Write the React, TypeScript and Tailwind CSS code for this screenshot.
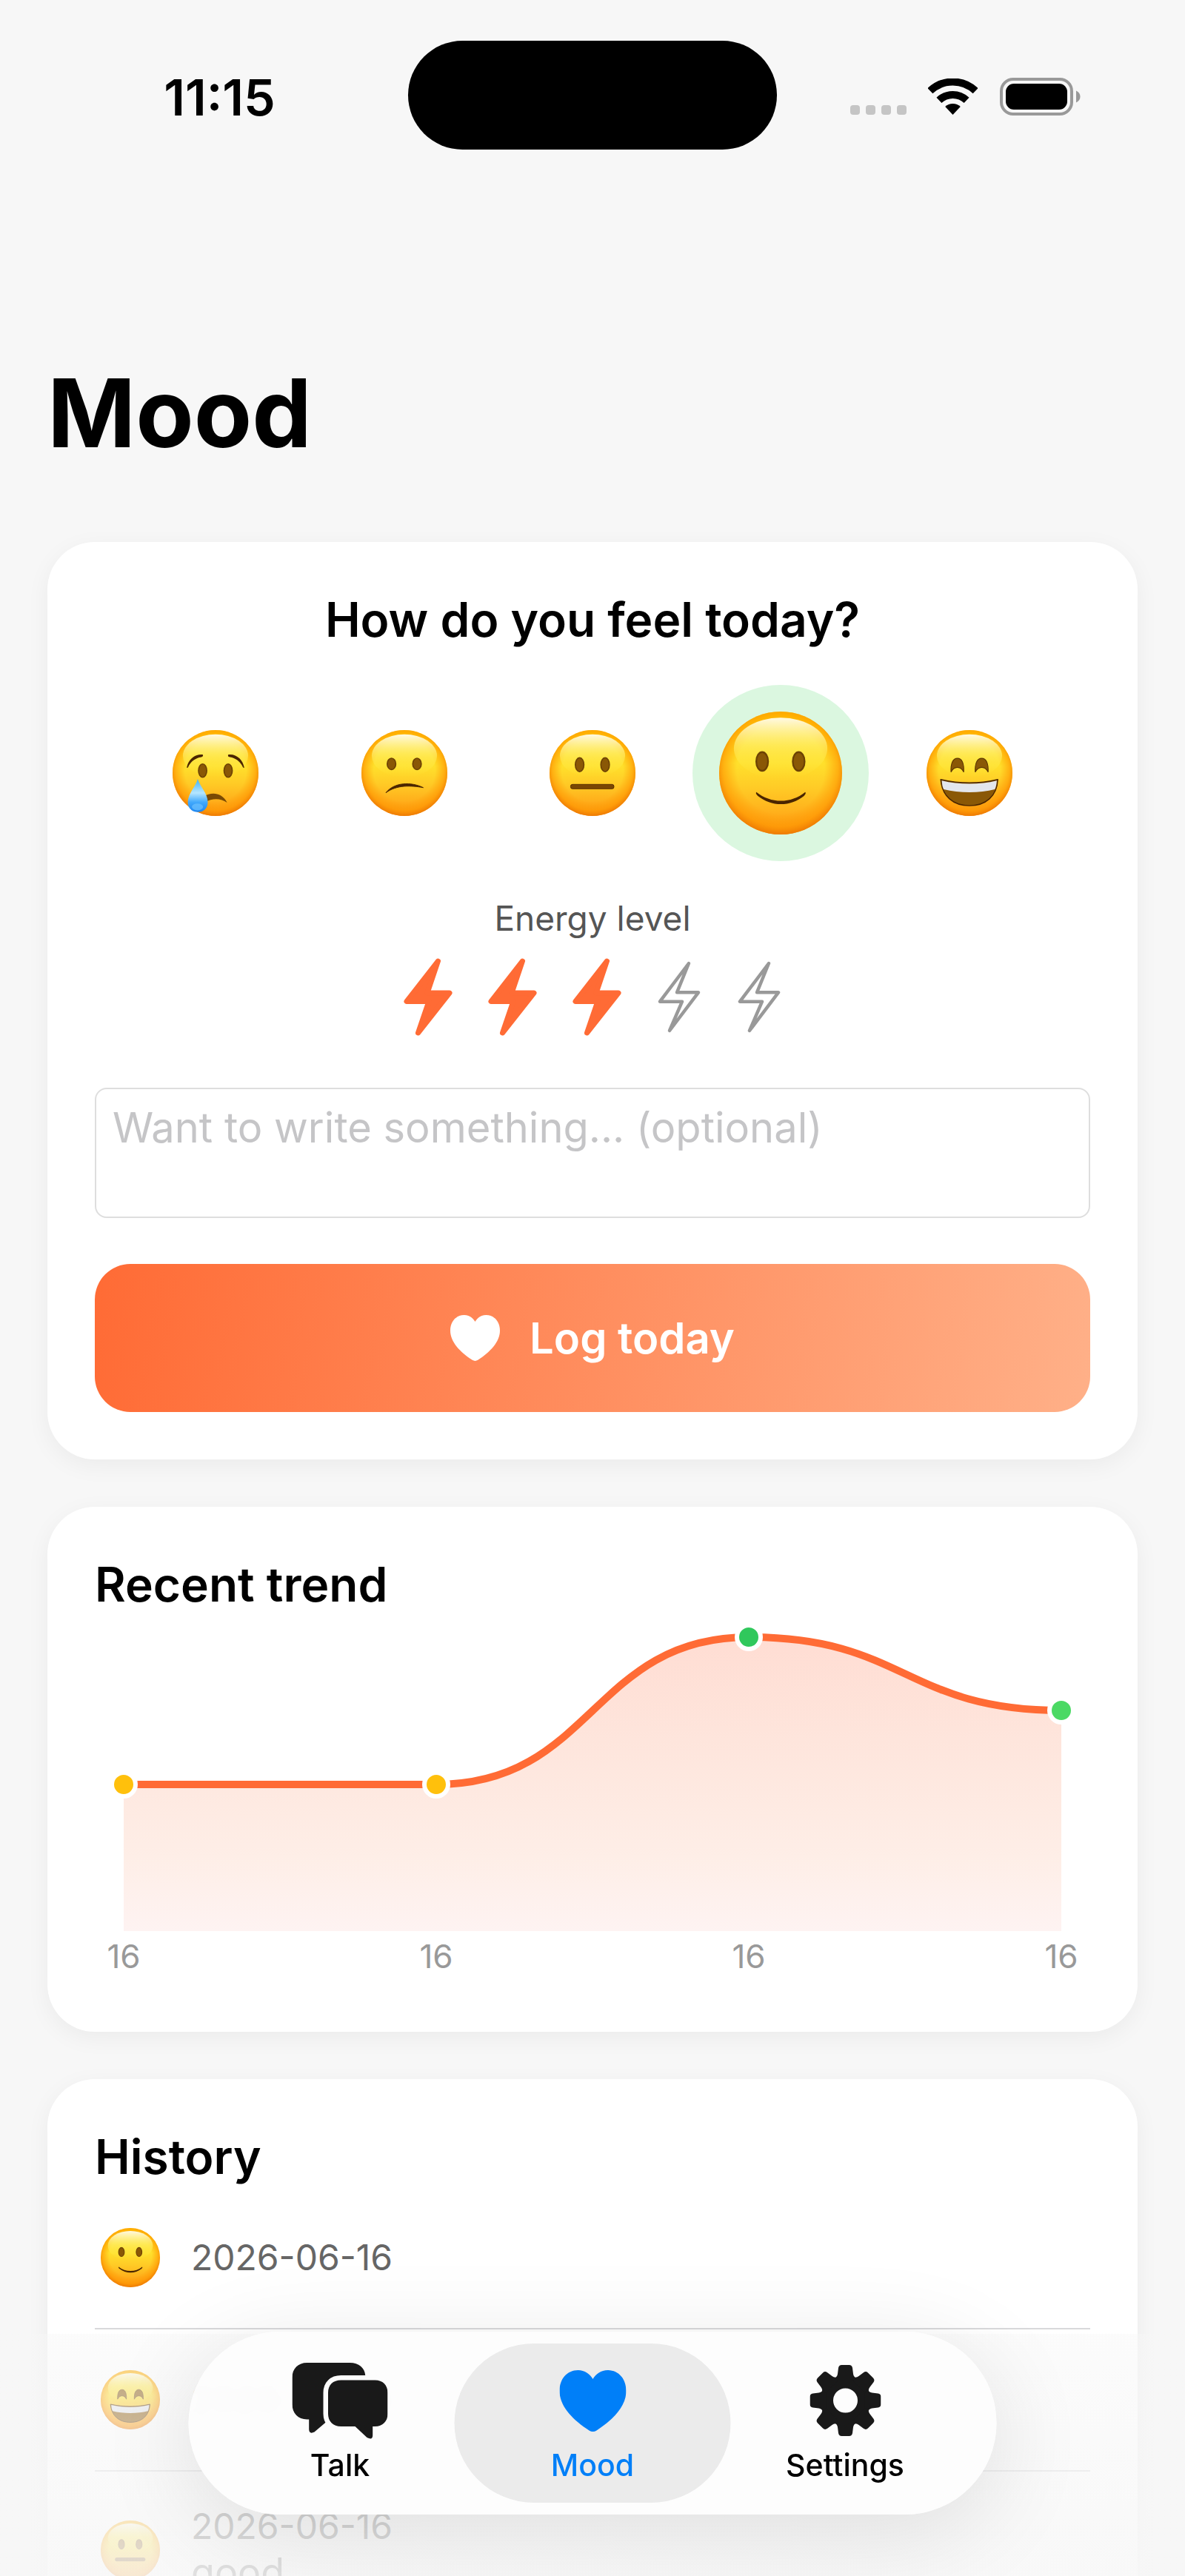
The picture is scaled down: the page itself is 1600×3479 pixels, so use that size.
import { useId, useState } from "react";
import type { ReactNode } from "react";

type Mood = "cry" | "confused" | "neutral" | "smile" | "grin";

const MOODS: { id: Mood; label: string }[] = [
  { id: "cry", label: "Very bad" },
  { id: "confused", label: "Bad" },
  { id: "neutral", label: "Okay" },
  { id: "smile", label: "Good" },
  { id: "grin", label: "Great" },
];

const DARK = "#4a2500";
const BROWN = "#8a5806";

function Eyes({ y, rx, ry }: { y: number; rx: number; ry: number }) {
  return (
    <g fill={BROWN} stroke="#6d4204" strokeWidth="1.4">
      <ellipse cx="35" cy={y} rx={rx - 0.6} ry={ry - 0.6} />
      <ellipse cx="64.7" cy={y} rx={rx - 0.6} ry={ry - 0.6} />
    </g>
  );
}

function Features({ mood, tear }: { mood: Mood; tear: string }) {
  switch (mood) {
    case "cry":
      return (
        <>
          <path d="M16.5 44 C18 35 25 27.5 35 28.5 C36.5 31 34 31.5 31 32 C24.5 34 20.5 38 18 43.5 Z" fill={DARK} />
          <path d="M83.5 44 C82 35 75 27.5 65 28.5 C63.5 31 66 31.5 69 32 C75.5 34 79.5 38 82 43.5 Z" fill={DARK} />
          <Eyes y={47.2} rx={5.4} ry={8.4} />
          <path d="M37 77 C44 72.5 57 71.5 63.5 84.5 C56 79.5 47 79 38 84 Z" fill="#7a4a04" />
          <path d="M29.3 57 C32 66 41 74 41 84 C41 91 36 95.5 29.3 95.5 C22.5 95.5 17.8 91 17.8 84 C17.8 74 27 66 29.3 57 Z" fill={`url(#${tear})`} />
          <ellipse cx="29" cy="89.5" rx="6.5" ry="4" fill="#6cc2ff" opacity="0.7" />
        </>
      );
    case "confused":
      return (
        <>
          <Eyes y={39.4} rx={5.6} ry={7.2} />
          <path d="M28.5 73 C38 60.5 58 60 72 67 C58 64.5 41 63.5 28.5 73 Z" fill={DARK} stroke={DARK} strokeWidth="0.8" strokeLinejoin="round" />
        </>
      );
    case "neutral":
      return (
        <>
          <Eyes y={40.3} rx={5.6} ry={8.7} />
          <rect x="24.5" y="63.2" width="50.5" height="5.2" rx="2.3" fill="#7a4603" stroke={DARK} strokeWidth="0.7" />
        </>
      );
    case "smile":
      return (
        <>
          <Eyes y={40.6} rx={5.4} ry={8.2} />
          <path d="M30.3 65.5 C42 75 58.500 75 70 65.5 C70.8 66.3 70.3 67.3 69 68.6 C58 77.5 42.500 77.5 31.5 68.6 C30 67.3 29.600 66.300 30.3 65.5 Z" fill={DARK} />
        </>
      );
    case "grin":
      return (
        <>
          <g fill={BROWN} stroke="#5f3903" strokeWidth="1">
            <path d="M28.5 49 C28 38 31 32.8 36 32.8 C41 32.8 43.8 38 43.3 49 C40 41.5 32 41.5 28.5 49 Z" />
            <path d="M56.7 49 C56.2 38 59.2 32.8 64.2 32.8 C69.2 32.8 72.2 38 71.7 49 C68.4 41.5 60.4 41.5 56.7 49 Z" />
          </g>
          <path d="M16.5 57.5 C38 62.5 62 62.5 83 57.5 C82 77 69 88 50 88 C31 88 18 77 16.5 57.5 Z" fill={BROWN} stroke={DARK} strokeWidth="1.2" strokeLinejoin="round" />
          <path d="M17.8 58.8 C38 63.8 62 63.8 81.8 58.8 C81.5 63 80.8 66.5 79.5 69 C62 73.5 38 73.5 20 69 C18.7 66.5 18 63 17.8 58.8 Z" fill="#e3e6ec" />
        </>
      );
  }
}

function Face({ mood, className }: { mood: Mood; className: string }) {
  const id = useId().replace(/[^a-zA-Z0-9]/g, "");
  return (
    <svg viewBox="0 0 100 100" className={className} aria-hidden="true">
      <defs>
        <linearGradient id={`${id}b`} x1="0" y1="0" x2="0" y2="1">
          <stop offset="0" stopColor="#ffc800" />
          <stop offset="0.42" stopColor="#ffe02c" />
          <stop offset="0.62" stopColor="#ffcb26" />
          <stop offset="0.85" stopColor="#ffac1a" />
          <stop offset="1" stopColor="#f99a10" />
        </linearGradient>
        <radialGradient id={`${id}r`} cx="0.5" cy="0.47" r="0.54">
          <stop offset="0.66" stopColor="#ff9500" stopOpacity="0" />
          <stop offset="0.86" stopColor="#ff9500" stopOpacity="0.6" />
          <stop offset="1" stopColor="#ea7404" />
        </radialGradient>
        <linearGradient id={`${id}h`} x1="0" y1="0" x2="0" y2="1">
          <stop offset="0" stopColor="#fffdf0" stopOpacity="0.95" />
          <stop offset="0.45" stopColor="#fff57a" stopOpacity="0.6" />
          <stop offset="1" stopColor="#ffe834" stopOpacity="0" />
        </linearGradient>
        <linearGradient id={`${id}t`} x1="0" y1="0" x2="0" y2="1">
          <stop offset="0" stopColor="#3fb2f5" />
          <stop offset="0.42" stopColor="#b5e6ff" />
          <stop offset="0.7" stopColor="#42a9fb" />
          <stop offset="1" stopColor="#1e86f0" />
        </linearGradient>
      </defs>
      <circle cx="50" cy="50" r="50" fill={`url(#${id}b)`} />
      <circle cx="50" cy="50" r="50" fill={`url(#${id}r)`} />
      <ellipse cx="50" cy="30" rx="38" ry="25" fill={`url(#${id}h)`} />
      <Features mood={mood} tear={`${id}t`} />
    </svg>
  );
}

function Heart({ className }: { className: string }) {
  return (
    <svg viewBox="0 0 90 83" className={className} fill="currentColor" aria-hidden="true">
      <path d="M45 12 C41 5 34 0 25 0 C10 0 0 12 0 28 C0 49 18 67 40 81.5 Q45 84.5 50 81.5 C72 67 90 49 90 28 C90 12 80 0 65 0 C56 0 49 5 45 12 Z" />
    </svg>
  );
}

function Bolt({ filled }: { filled: boolean }) {
  return filled ? (
    <svg viewBox="0 0 66 105" className="h-[105px] w-[66px]" aria-hidden="true">
      <path d="M46.5 4 L4 58.5 H34 L19.5 101 L62 47 H32 Z" fill="#ff6b35" stroke="#ff6b35" strokeWidth="7" strokeLinejoin="round" />
    </svg>
  ) : (
    <svg viewBox="0 0 60 97" className="h-[97px] w-[60px]" aria-hidden="true">
      <path d="M43 3 L4 54.7 H34 L17 94 L56 42.3 H27 Z" fill="none" stroke="#999999" strokeWidth="4.5" strokeLinejoin="round" />
    </svg>
  );
}

function StatusBar() {
  return (
    <header className="flex items-center px-[42px] pt-[55px]">
      <div className="flex flex-1 justify-center pt-1">
        <time className="text-[68px] leading-[80px] font-semibold">11:15</time>
      </div>
      <div className="h-[147px] w-[498px] rounded-full bg-black" />
      <div className="flex flex-1 items-center justify-center pt-1">
        <div className="mr-[29px] flex gap-2 pt-9">
          {[0, 1, 2, 3].map((dot) => (
            <span key={dot} className="size-[13px] rounded-[4px] bg-[#c5c5c5]" />
          ))}
        </div>
        <svg viewBox="0 0 67 49" className="mr-[30px] h-[49px] w-[67px]" aria-label="Wi-Fi">
          <g fill="none" stroke="#000" strokeWidth="10">
            <path d="M2.9 16.7 A44.5 44.5 0 0 1 64.1 16.7" />
            <path d="M14.9 29.4 A27 27 0 0 1 52.1 29.4" />
          </g>
          <path d="M33.5 49 L23.2 38.1 A15 15 0 0 1 43.8 38.1 Z" />
        </svg>
        <svg viewBox="0 0 109 51" className="h-[51px] w-[109px]" aria-label="Battery">
          <rect x="2" y="2" width="95" height="47" rx="16" fill="none" stroke="#999" strokeWidth="4" />
          <rect x="8" y="8" width="83" height="35" rx="11" />
          <path d="M103 17.5 Q108.5 20 108.5 25.5 Q108.5 31 103 33.5 Z" fill="#999" />
        </svg>
      </div>
    </header>
  );
}

function Card({ children }: { children: ReactNode }) {
  return (
    <section className="rounded-[64px] bg-white p-16 shadow-[0_8px_32px_rgba(0,0,0,0.05)]">
      {children}
    </section>
  );
}

function MoodForm() {
  const [mood, setMood] = useState<Mood>("smile");
  const [energy, setEnergy] = useState(3);
  return (
    <Card>
      <h2 className="text-center text-[64px] leading-[82px] font-semibold">How do you feel today?</h2>
      <div className="mt-[47px] grid grid-cols-5 px-9">
        {MOODS.map(({ id, label }) => {
          const selected = mood === id;
          return (
            <button
              key={id}
              type="button"
              aria-label={label}
              aria-pressed={selected}
              onClick={() => setMood(id)}
              className="flex justify-center"
            >
              <span
                className={
                  selected
                    ? "flex size-[238px] items-center justify-center rounded-full bg-[#dbf7e0]"
                    : "flex size-[238px] items-center justify-center rounded-full"
                }
              >
                <Face mood={id} className={selected ? "size-[166px]" : "size-[116px]"} />
              </span>
            </button>
          );
        })}
      </div>
      <p className="mt-[47px] text-center text-[46px] leading-[60px] text-[#555555]">Energy level</p>
      <div className="mt-6 flex items-center justify-center gap-12">
        {[1, 2, 3, 4, 5].map((level) => (
          <button key={level} type="button" aria-label={`Energy ${level}`} onClick={() => setEnergy(level)}>
            <Bolt filled={level <= energy} />
          </button>
        ))}
      </div>
      <textarea
        aria-label="Note"
        placeholder="Want to write something... (optional)"
        className="mt-[70px] block h-[176px] w-full resize-none rounded-[16px] border-2 border-[#dedede] px-[22px] py-4 text-[56px] leading-[72px] outline-none placeholder:text-[#c5c5c7]"
      />
      <button
        type="button"
        className="mt-[62px] flex h-[200px] w-full items-center justify-center gap-10 rounded-[48px] bg-[linear-gradient(98deg,#ff6b35,#ffb088)] text-[58px] leading-[72px] font-semibold text-white"
      >
        <Heart className="h-[62px] w-[67px]" />
        Log today
      </button>
    </Card>
  );
}

const POINTS = [
  { x: 39, y: 229, color: "#ffc00c" },
  { x: 461, y: 229, color: "#ffc00c" },
  { x: 883, y: 30, color: "#30c85c" },
  { x: 1305, y: 129, color: "#4bd964" },
];

function curve() {
  return POINTS.map((p, i) => {
    if (i === 0) return `M${p.x} ${p.y}`;
    const q = POINTS[i - 1];
    const mid = (p.x + q.x) / 2;
    return `C${mid} ${q.y} ${mid} ${p.y} ${p.x} ${p.y}`;
  }).join(" ");
}

function Trend() {
  return (
    <Card>
      <h2 className="text-[64px] leading-[82px] font-semibold">Recent trend</h2>
      <svg viewBox="0 0 1344 427" className="block h-auto w-full overflow-visible" role="img" aria-label="Mood trend">
        <defs>
          <linearGradient id="area" x1="0" y1="0" x2="0" y2="1">
            <stop offset="0" stopColor="#ffddd3" />
            <stop offset="0.35" stopColor="#fee5dc" />
            <stop offset="0.75" stopColor="#feeee7" />
            <stop offset="1" stopColor="#fef3f2" />
          </linearGradient>
        </defs>
        <path d={`${curve()} V427 H39 Z`} fill="url(#area)" />
        <path d={curve()} fill="none" stroke="#ff6b35" strokeWidth="10" />
        {POINTS.map((p) => (
          <circle key={p.x} cx={p.x} cy={p.y} r="16" fill={p.color} stroke="#fff" strokeWidth="6" />
        ))}
      </svg>
      <div className="my-1 flex justify-between pb-1 text-[44px] leading-[60px] text-[#999999]">
        {POINTS.map((p) => (
          <span key={p.x} className="w-[78px] text-center">
            16
          </span>
        ))}
      </div>
    </Card>
  );
}

const ENTRIES: { mood: Mood; date: string; note?: string }[] = [
  { mood: "smile", date: "2026-06-16" },
  { mood: "grin", date: "2026-06-16" },
  { mood: "neutral", date: "2026-06-16", note: "good" },
];

function History() {
  return (
    <Card>
      <h2 className="text-[64px] leading-[82px] font-semibold">History</h2>
      <ul>
        {ENTRIES.map((entry, i) => (
          <li key={i} className="flex min-h-[192px] items-center gap-[42px] border-b-2 border-[#d9d9db] py-11 pl-2">
            <Face mood={entry.mood} className="size-20 shrink-0" />
            <div>
              <p className="text-[48px] leading-[60px] text-[#666666]">{entry.date}</p>
              {entry.note && <p className="text-[52px] leading-[64px] text-[#666666]">{entry.note}</p>}
            </div>
          </li>
        ))}
      </ul>
    </Card>
  );
}

function TalkIcon() {
  return (
    <svg viewBox="0 0 129 103" className="h-[103px] w-[129px]" aria-hidden="true">
      <path d="M20 0 H78 C90 0 98 7 98.7 16.7 V76.5 H50 L30 93.5 Q23 97 22.7 90 V76.5 H20 C8 76.5 0 68 0 56 V20 C0 8 8 0 20 0 Z" fill="#191919" />
      <path
        d="M66 23.5 H112 C122 23.5 129 30 129 40.5 V69 C129 79 122 86 112 86 H108.7 V98 Q108.7 105 101 101 L85 86 H66 C55 86 48.5 79 48.5 69 V40.5 C48.5 30 55 23.5 66 23.5 Z"
        fill="#191919"
        stroke="#fdfdfd"
        strokeWidth="13"
        paintOrder="stroke"
      />
    </svg>
  );
}

function GearIcon() {
  return (
    <svg viewBox="0 0 96 96" className="size-[96px]" aria-hidden="true">
      <circle cx="48" cy="48" r="25" fill="none" stroke="#191919" strokeWidth="17" />
      {[0, 45, 90, 135, 180, 225, 270, 315].map((angle) => (
        <path
          key={angle}
          d="M33 18 Q37 16 37.5 12 L38.5 4 Q39.2 0 43 0 H53 Q56.8 0 57.5 4 L58.5 12 Q59 16 63 18 L58 22 H38 Z"
          fill="#191919"
          transform={`rotate(${angle} 48 48)`}
        />
      ))}
    </svg>
  );
}

function TabBar() {
  return (
    <nav
      aria-label="Tabs"
      className="absolute bottom-[83px] left-1/2 grid h-[247px] w-[1091px] max-w-full -translate-x-1/2 grid-cols-3 rounded-full bg-[#fdfdfd]/95 px-[34px] py-4 shadow-[0_24px_130px_rgba(0,0,0,0.11)] backdrop-blur-sm"
    >
      <a href="#talk" className="flex flex-col items-center justify-end pb-[27px] text-black">
        <span className="flex h-[110px] items-center">
          <TalkIcon />
        </span>
        <span className="mt-2 text-[41px] leading-[48px] font-medium">Talk</span>
      </a>
      <a
        href="#mood"
        aria-current="page"
        className="-mx-4 flex flex-col items-center justify-end rounded-full bg-[#ebebeb] pb-[27px] text-[#007ff8]"
      >
        <span className="flex h-[110px] items-center">
          <Heart className="h-[83px] w-[90px]" />
        </span>
        <span className="mt-2 text-[41px] leading-[48px] font-medium">Mood</span>
      </a>
      <a href="#settings" className="flex flex-col items-center justify-end pb-[27px] text-black">
        <span className="flex h-[110px] items-center">
          <GearIcon />
        </span>
        <span className="mt-2 text-[41px] leading-[48px] font-medium">Settings</span>
      </a>
    </nav>
  );
}

export default function App() {
  return (
    <div className="relative h-screen overflow-hidden bg-[#f7f7f7] font-['Inter',sans-serif] text-black">
      <div className="h-full overflow-y-auto [scrollbar-width:none]">
        <StatusBar />
        <main className="px-16 pb-[400px]">
          <h1 className="mt-[276px] mb-[94px] text-[128px] leading-[160px] font-bold">Mood</h1>
          <div className="flex flex-col gap-16">
            <MoodForm />
            <Trend />
            <History />
          </div>
        </main>
      </div>
      <div className="pointer-events-none absolute inset-x-0 bottom-0 h-[327px] bg-linear-to-b from-[#f7f7f7]/45 to-[#f7f7f7]/85" />
      <TabBar />
    </div>
  );
}
